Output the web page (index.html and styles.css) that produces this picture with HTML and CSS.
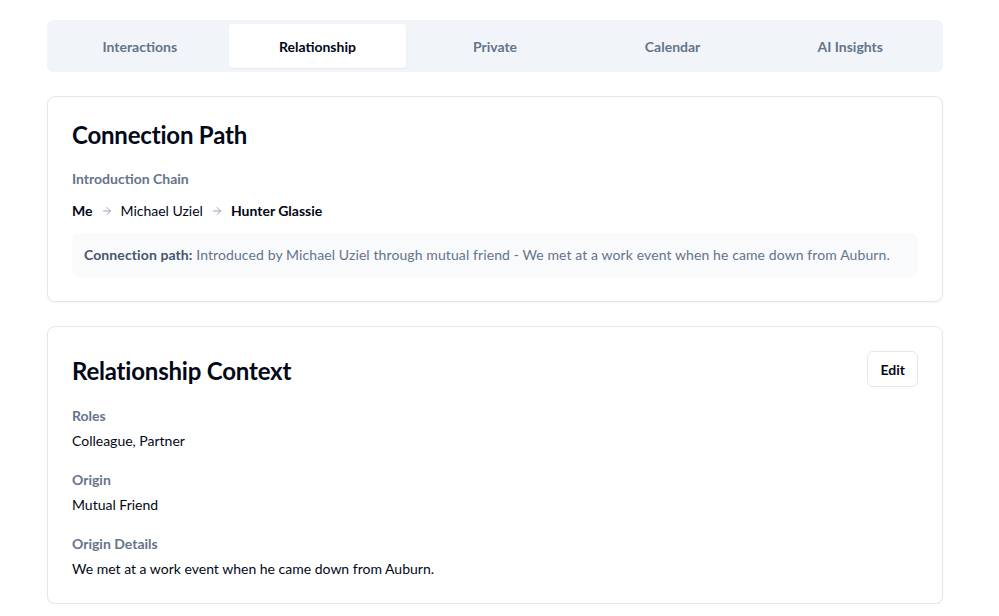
FILE: index.html
```html
<!DOCTYPE html>
<html lang="en">
<head>
    <meta charset="UTF-8">
    <meta name="viewport" content="width=device-width, initial-scale=1.0">
    <title>Hunter Glassie - Relationship</title>
    <link rel="stylesheet" href="styles.css">
</head>
<body>

    <div class="page">
        <nav class="tabs">
            <button class="tab">Interactions</button>
            <button class="tab active">Relationship</button>
            <button class="tab">Private</button>
            <button class="tab">Calendar</button>
            <button class="tab">AI Insights</button>
        </nav>

        <section class="card">
            <div class="card-header">
                <h2 class="card-title">Connection Path</h2>
            </div>
            <div class="card-body">
                <div class="label">Introduction Chain</div>
                <div class="chain">
                    <span class="strong">Me</span>
                    <svg class="arrow" viewBox="0 0 24 24"><path d="M5 12h14M12 5l7 7-7 7"/></svg>
                    <span>Michael Uziel</span>
                    <svg class="arrow" viewBox="0 0 24 24"><path d="M5 12h14M12 5l7 7-7 7"/></svg>
                    <span class="strong">Hunter Glassie</span>
                </div>
                <div class="note">
                    <b>Connection path:</b> Introduced by Michael Uziel through mutual friend - We met at a work event when he came down from Auburn.
                </div>
            </div>
        </section>

        <section class="card">
            <div class="card-header row">
                <h2 class="card-title">Relationship Context</h2>
                <button class="btn">Edit</button>
            </div>
            <div class="card-body fields">
                <div class="field">
                    <div class="label">Roles</div>
                    <div class="value">Colleague, Partner</div>
                </div>
                <div class="field">
                    <div class="label">Origin</div>
                    <div class="value">Mutual Friend</div>
                </div>
                <div class="field">
                    <div class="label">Origin Details</div>
                    <div class="value">We met at a work event when he came down from Auburn.</div>
                </div>
            </div>
        </section>
    </div>

</body>
</html>
```

FILE: styles.css
```css
body {
    font-family: Lato, "Open Sans", sans-serif;
    background-color: #fff;
    color: #020817;
    margin: 0;
    padding: 0;
}

.page {
    width: 896px;
    margin-left: 47px;
    padding-top: 20px;
    display: flex;
    flex-direction: column;
    gap: 24px;
}

.tabs {
    display: grid;
    grid-template-columns: repeat(5, 1fr);
    background-color: #f1f5f9;
    border-radius: 6px;
    padding: 4px;
    height: 52px;
    box-sizing: border-box;
}

.tab {
    font-family: inherit;
    font-size: 14px;
    font-weight: 700;
    color: #64748b;
    background: none;
    border: none;
    border-radius: 4px;
    cursor: pointer;
}

.tab.active {
    background-color: #fff;
    color: #020817;
    box-shadow: 0 1px 2px rgba(0, 0, 0, 0.05);
}

.card {
    border: 1px solid #e2e8f0;
    border-radius: 8px;
    box-shadow: 0 1px 2px rgba(0, 0, 0, 0.05);
    background-color: #fff;
}

.card-header {
    padding: 22px 24px 0;
}

.card-header.row {
    display: flex;
    justify-content: space-between;
    align-items: center;
    padding-top: 24px;
}

.card-header.row .card-title {
    margin-top: 3px;
}

.card-title {
    margin: 0;
    font-size: 24px;
    line-height: 32px;
    font-weight: 700;
    letter-spacing: -0.2px;
}

.card-body {
    padding: 18px 24px 24px;
}

.label {
    font-size: 14px;
    line-height: 20px;
    font-weight: 700;
    color: #64748b;
}

.chain {
    display: flex;
    align-items: center;
    gap: 8px;
    margin-top: 12px;
    font-size: 14px;
    line-height: 20px;
}

.strong {
    font-weight: 700;
}

.arrow {
    width: 12px;
    height: 12px;
    fill: none;
    stroke: #94a3b8;
    stroke-width: 2;
    stroke-linecap: round;
    stroke-linejoin: round;
}

.note {
    margin-top: 12px;
    background-color: #f8fafc;
    border-radius: 8px;
    padding: 12px;
    font-size: 14px;
    line-height: 20px;
    color: #64748b;
    letter-spacing: 0.1px;
}

.note b {
    color: #475569;
    font-weight: 700;
}

.btn {
    font-family: inherit;
    font-size: 14px;
    font-weight: 700;
    color: #020817;
    background-color: #fff;
    border: 1px solid #e2e8f0;
    border-radius: 6px;
    height: 36px;
    padding: 0 12px;
    cursor: pointer;
}

.fields {
    display: flex;
    flex-direction: column;
    gap: 19px;
    padding-top: 19px;
    padding-bottom: 24px;
}

.value {
    margin-top: 5px;
    font-size: 14px;
    line-height: 20px;
}
```
